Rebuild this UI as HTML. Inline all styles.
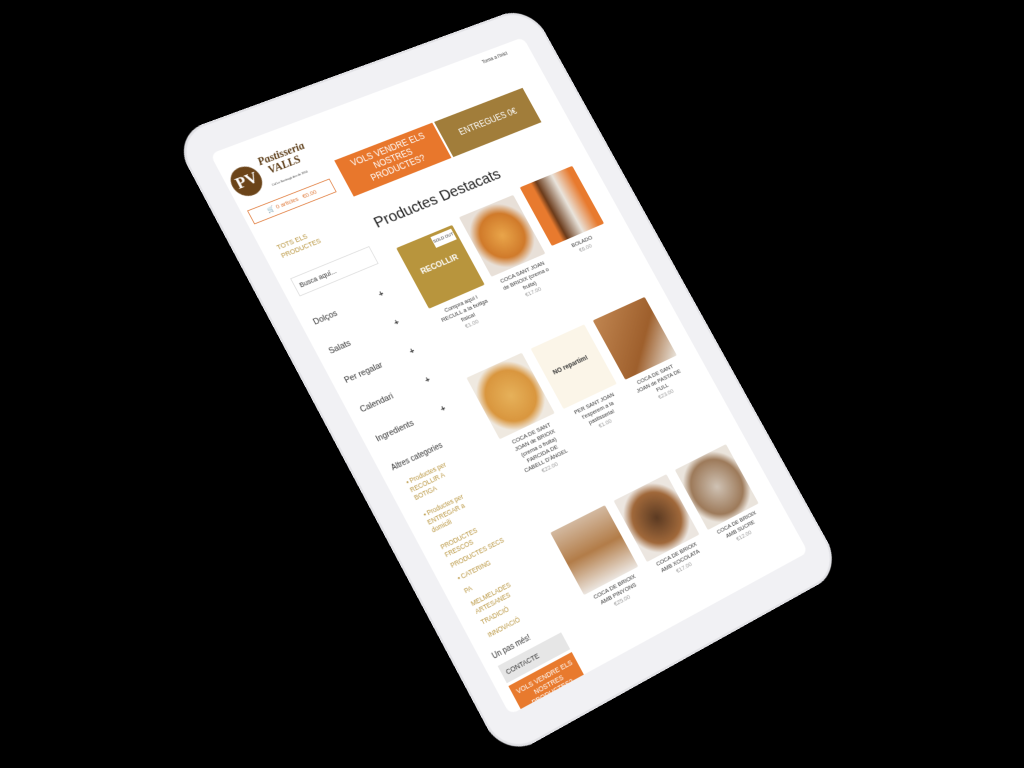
<!DOCTYPE html>
<html><head><meta charset="utf-8"><style>
html,body{margin:0;padding:0;background:#000;width:1024px;height:768px;overflow:hidden;font-family:"Liberation Sans",sans-serif}
#w{position:absolute;left:0;top:0;width:480px;height:800px;transform-origin:0 0;
transform:matrix3d(0.74046,-0.23702,0,0.00016833, 0.35776,0.67708,0,-0.0000337, 0,0,1,0, 210,154,0,1)}
.frame{position:absolute;left:-34px;top:-40px;width:548px;height:884px;border-radius:46px;background:#f1f1f4;box-shadow:inset 0 0 0 3px #e2e2e6}
.scr{position:absolute;left:0;top:0;width:480px;height:800px;background:#fff;border-radius:10px;overflow:hidden;color:#333}
.a{position:absolute}
.gold{color:#b8943c}
.btn{position:absolute;color:#fff;font-size:12px;text-align:center;display:flex;align-items:center;justify-content:center;line-height:1.15}
.img{position:absolute;border-radius:2px}
.cap{position:absolute;font-size:8px;text-align:center;color:#333;line-height:1.25}
.pr{color:#999}
.side{position:absolute;left:16px;font-size:11px;color:#333}
.plus{position:absolute;left:112px;font-size:11px;font-weight:bold}
.sub{position:absolute;left:24px;font-size:8.5px;color:#b8943c;line-height:1.3}
</style></head><body>
<div id="w">
<div class="frame"></div>
<div class="scr">
 <div class="a" style="right:34px;top:10px;font-size:7px">Torna a l'inici</div>
 <div class="a" style="left:6px;top:30px;width:40px;height:40px;border-radius:50%;background:#6b4419"></div>
 <div class="a" style="left:12px;top:36px;color:#fff;font:bold 22px 'Liberation Serif',serif">PV</div>
 <div class="a" style="left:52px;top:26px;color:#5a3a14;font:italic bold 15px 'Liberation Serif',serif;line-height:1">Pastisseria<br>&nbsp;&nbsp;VALLS</div>
 <div class="a" style="left:54px;top:64px;font-size:4px">Cal Lo Santragà des de 1950</div>
 <div class="a" style="left:8px;top:86px;width:118px;height:18px;border:1px solid #e07a3a;font-size:8px;color:#e07a3a;line-height:18px;text-align:center">🛒 0 articles &nbsp; €0.00</div>
 <div class="a gold" style="left:20px;top:140px;font-size:9px;line-height:1.3">TOTS ELS<br>PRODUCTES</div>
 <div class="a" style="left:16px;top:188px;width:108px;height:24px;border:1px solid #ddd;font-size:9px;line-height:24px;padding-left:6px">Busca aquí...</div>
 <div class="side" style="top:246px">Dolços</div><div class="plus" style="top:246px">+</div>
 <div class="side" style="top:288px">Salats</div><div class="plus" style="top:288px">+</div>
 <div class="side" style="top:330px">Per regalar</div><div class="plus" style="top:330px">+</div>
 <div class="side" style="top:372px">Calendari</div><div class="plus" style="top:372px">+</div>
 <div class="side" style="top:414px">Ingredients</div><div class="plus" style="top:414px">+</div>
 <div class="side" style="top:456px;font-size:10px">Altres categories</div>
 <div class="sub" style="top:480px">▪ Productes per<br>RECOLLIR A<br>BOTIGA</div>
 <div class="sub" style="top:526px">▪ Productes per<br>ENTREGAR a<br>domicili</div>
 <div class="sub" style="top:572px">PRODUCTES<br>FRESCOS</div>
 <div class="sub" style="top:598px">PRODUCTES SECS</div>
 <div class="sub" style="top:616px">▪ CATERING</div>
 <div class="sub" style="top:634px">PA</div>
 <div class="sub" style="top:652px">MELMELADES<br>ARTESANES</div>
 <div class="sub" style="top:678px">TRADICIÓ</div>
 <div class="sub" style="top:696px">INNOVACIÓ</div>
 <div class="side" style="top:722px;font-size:10px">Un pas més!</div>
 <div class="a" style="left:16px;top:740px;width:90px;height:24px;background:#e6e6e6;font-size:9px;line-height:24px;padding-left:6px">CONTACTE</div>
 <div class="btn" style="left:16px;top:768px;width:96px;height:44px;background:#e87a2e;font-size:9px">VOLS VENDRE ELS NOSTRES PRODUCTES?</div>
 <div class="btn" style="left:146px;top:66px;width:150px;height:54px;background:#e8772c">VOLS VENDRE ELS<br>NOSTRES<br>PRODUCTES?</div>
 <div class="btn" style="left:299px;top:66px;width:142px;height:54px;background:#a17d3a">ENTREGUES 0€</div>
 <div class="a" style="left:154px;top:152px;font-size:21px;color:#222">Productes Destacats</div>
 <div class="img" style="left:164px;top:204px;width:86px;height:90px;background:#b8953d"></div>
 <div class="a" style="left:214px;top:208px;width:32px;height:16px;background:#fff;font-size:6px;line-height:16px;text-align:center">SOLD OUT</div>
 <div class="a" style="left:166px;top:240px;width:82px;color:#fff;text-align:center;font-weight:bold;font-size:11px">RECOLLIR</div>
 <div class="cap" style="left:160px;top:300px;width:94px">Compra aquí i<br>RECULL a la botiga<br>física!<br><span class="pr">€1.00</span></div>
 <div class="img" style="left:264px;top:198px;width:86px;height:90px;background:radial-gradient(circle at 50% 50%,#e9a54a,#d07a2a 50%,#e8e0d8 72%)"></div>
 <div class="cap" style="left:260px;top:294px;width:94px">COCA SANT JOAN<br>de BRIOIX (crema o<br>fruita)<br><span class="pr">€17.00</span></div>
 <div class="img" style="left:364px;top:192px;width:86px;height:90px;background:linear-gradient(90deg,#e87a2e 0 20%,#6a3a1a 30%,#e9e4dc 60%,#e87a2e 90%)"></div>
 <div class="cap" style="left:360px;top:288px;width:94px">BOLADO<br><span class="pr">€6.00</span></div>
 <div class="img" style="left:164px;top:396px;width:86px;height:90px;background:radial-gradient(circle,#e6b15a,#d9963e 55%,#efe9e0 75%)"></div>
 <div class="cap" style="left:160px;top:492px;width:94px">COCA DE SANT<br>JOAN de BRIOIX<br>(crema o fruita)<br>FARCIDA DE<br>CABELL D'ÀNGEL<br><span class="pr">€22.00</span></div>
 <div class="img" style="left:264px;top:396px;width:86px;height:90px;background:#fbf5e8"></div>
 <div class="a" style="left:276px;top:432px;font-size:9px;font-weight:bold">NO repartim!</div>
 <div class="cap" style="left:260px;top:492px;width:94px">PER SANT JOAN<br>t'esperem a la<br>pastisseria!<br><span class="pr">€1.00</span></div>
 <div class="img" style="left:364px;top:396px;width:86px;height:90px;background:linear-gradient(135deg,#c08550,#9e5f2c 60%,#e9e4dc)"></div>
 <div class="cap" style="left:360px;top:492px;width:94px">COCA DE SANT<br>JOAN de PASTA DE<br>FULL<br><span class="pr">€23.00</span></div>
 <div class="img" style="left:164px;top:622px;width:86px;height:90px;background:linear-gradient(#d3b9a0,#b27c48 50%,#ece6e0)"></div>
 <div class="cap" style="left:160px;top:716px;width:94px">COCA DE BRIOIX<br>AMB PINYONS<br><span class="pr">€25.00</span></div>
 <div class="img" style="left:264px;top:622px;width:86px;height:90px;background:radial-gradient(circle,#5b3a22,#a0683a 55%,#ece6e0 75%)"></div>
 <div class="cap" style="left:260px;top:716px;width:94px">COCA DE BRIOIX<br>AMB XOCOLATA<br><span class="pr">€17.00</span></div>
 <div class="img" style="left:364px;top:622px;width:86px;height:90px;background:radial-gradient(circle,#cfc2b4,#9d7a5a 60%,#eae4dc 78%)"></div>
 <div class="cap" style="left:360px;top:716px;width:94px">COCA DE BRIOIX<br>AMB SUCRE<br><span class="pr">€12.00</span></div>
</div>
</div>
</body></html>
